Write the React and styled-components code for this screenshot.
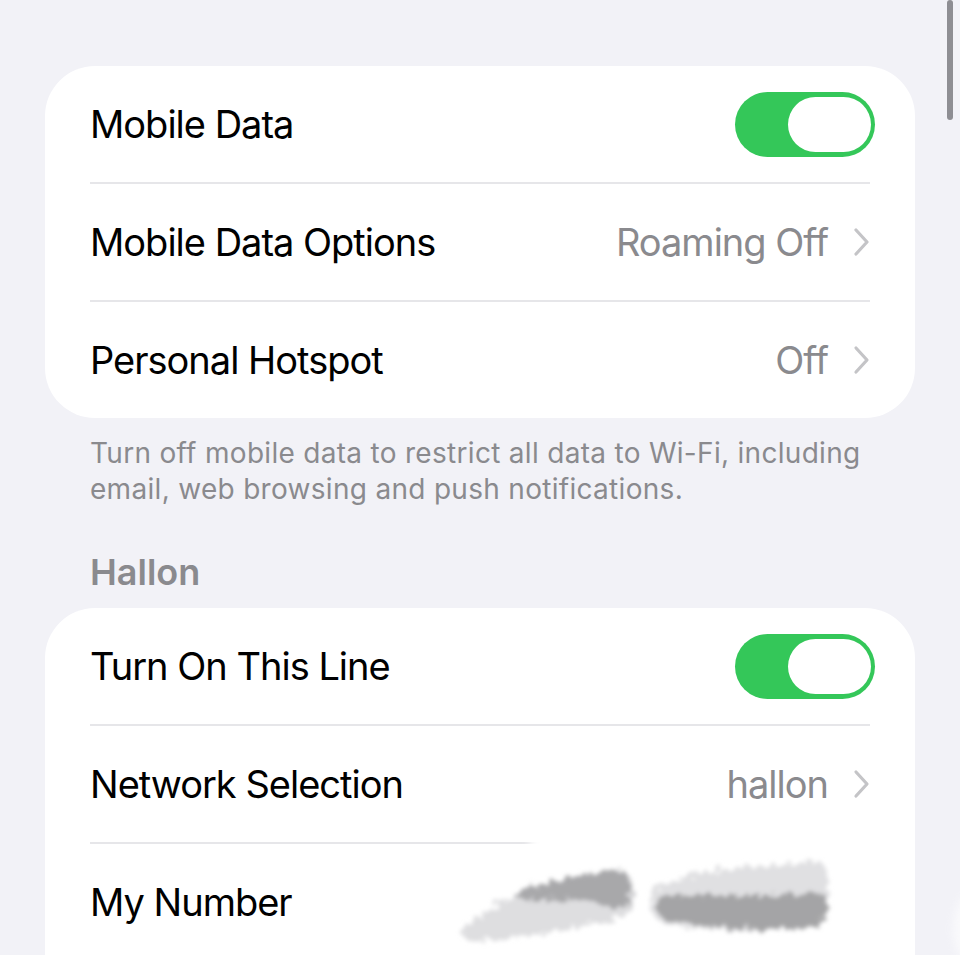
import React from 'react'
import styled, { createGlobalStyle } from 'styled-components'

const GlobalStyle = createGlobalStyle`
  html, body {
    margin: 0;
    padding: 0;
    height: 955px;
    overflow: hidden;
    background: #f2f2f7;
  }
  * { box-sizing: border-box; }
`

const Page = styled.div`
  position: relative;
  height: 955px;
  overflow: hidden;
  background: #f2f2f7;
  padding: 66px 45px 0;
  font-family: Inter, "Noto Sans", "Liberation Sans", sans-serif;
  color: #000;
`

const Card = styled.div`
  background: #fff;
  border-radius: 50px;
  padding: 0 45px;
`

const Row = styled.div`
  position: relative;
  display: flex;
  align-items: center;
  height: ${(p) => (p.first ? '116px' : '118px')};
  border-top: ${(p) => (p.first ? 'none' : '2px solid #e6e6e9')};
`

const Label = styled.div`
  flex: 1;
  font-size: 38px;
  letter-spacing: -1px;
`

const Value = styled.div`
  font-size: 38px;
  color: #8a8a8e;
  letter-spacing: -1px;
  margin-right: 24px;
`

const Chevron = styled.svg`
  width: 18px;
  height: 30px;
  flex: none;
`

const Track = styled.div`
  position: relative;
  width: 140px;
  height: 65px;
  margin-right: -5px;
  border-radius: 33px;
  background: #34c759;
  flex: none;
`

const Knob = styled.div`
  position: absolute;
  top: 5px;
  right: 4px;
  width: 83px;
  height: 55px;
  border-radius: 28px;
  background: #fff;
`

const Footer = styled.p`
  margin: 17px 0 0;
  padding: 0 45px;
  font-size: 28px;
  line-height: 36px;
  color: #8a8a8e;
  letter-spacing: 0.3px;
`

const Header = styled.h2`
  margin: 44px 0 15px;
  padding: 0 45px;
  font-size: 36px;
  line-height: 42px;
  font-weight: 600;
  color: #8a8a8e;
`

const Scroll = styled.div`
  position: absolute;
  top: 0;
  right: 7px;
  width: 6px;
  height: 120px;
  border-radius: 3px;
  background: #8e8e93;
`

const Scribble = styled.svg`
  position: absolute;
  left: 360px;
  top: -10px;
  width: 510px;
  height: 123px;
  overflow: visible;
  pointer-events: none;
`

function Toggle() {
  return (
    <Track>
      <Knob />
    </Track>
  )
}

function Arrow() {
  return (
    <Chevron viewBox="0 0 18 30">
      <path d="M4 3 L15 15 L4 27" fill="none" stroke="#c4c4c7" strokeWidth="3.2" strokeLinecap="round" strokeLinejoin="round" />
    </Chevron>
  )
}

// hand-drawn redaction smudge over the phone number
function Redaction() {
  return (
    <Scribble viewBox="0 0 510 123">
      <defs>
        <filter id="rough" x="-20%" y="-40%" width="140%" height="180%">
          <feTurbulence type="fractalNoise" baseFrequency="0.14" numOctaves="3" seed="7" result="n" />
          <feDisplacementMap in="SourceGraphic" in2="n" scale="14" result="d" />
          <feGaussianBlur in="d" stdDeviation="2.2" />
        </filter>
        <filter id="soft" x="-30%" y="-60%" width="160%" height="220%">
          <feGaussianBlur stdDeviation="4" />
        </filter>
      </defs>
      <rect x="80" y="0" width="340" height="20" fill="#fff" filter="url(#soft)" />
      <rect x="110" y="4" width="315" height="12" fill="#fff" />
      <ellipse cx="525" cy="95" rx="22" ry="38" fill="#fff" opacity="0.6" filter="url(#soft)" />
      <g filter="url(#rough)">
        <path d="M18 92 C40 66 100 46 172 36 C188 44 188 72 176 82 C130 94 70 104 24 108 C10 104 10 97 18 92 Z" fill="#dedee0" />
        <path d="M62 60 C100 46 140 38 174 36 C184 48 183 68 171 76 C150 70 120 64 92 66 C76 66 64 64 62 60 Z" fill="#a8a8aa" />
        <path d="M205 55 C230 38 300 30 372 28 C382 45 380 80 366 92 C320 100 250 98 210 88 C198 78 198 65 205 55 Z" fill="#e0e0e2" />
        <path d="M210 62 C260 60 320 62 374 60 C380 72 377 88 364 94 C320 96 260 95 215 86 C204 78 204 68 210 62 Z" fill="#a4a4a6" />
      </g>
    </Scribble>
  )
}

export default function App() {
  return (
    <>
      <GlobalStyle />
      <Page>
        <Scroll />
        <Card>
          <Row first>
            <Label>Mobile Data</Label>
            <Toggle />
          </Row>
          <Row>
            <Label>Mobile Data Options</Label>
            <Value>Roaming Off</Value>
            <Arrow />
          </Row>
          <Row>
            <Label>Personal Hotspot</Label>
            <Value>Off</Value>
            <Arrow />
          </Row>
        </Card>
        <Footer>
          Turn off mobile data to restrict all data to Wi-Fi, including email, web browsing and push notifications.
        </Footer>
        <Header>Hallon</Header>
        <Card>
          <Row first>
            <Label>Turn On This Line</Label>
            <Toggle />
          </Row>
          <Row>
            <Label>Network Selection</Label>
            <Value>hallon</Value>
            <Arrow />
          </Row>
          <Row>
            <Label>My Number</Label>
            <Redaction />
          </Row>
          <Row>
            <Label>&nbsp;</Label>
          </Row>
        </Card>
      </Page>
    </>
  )
}
